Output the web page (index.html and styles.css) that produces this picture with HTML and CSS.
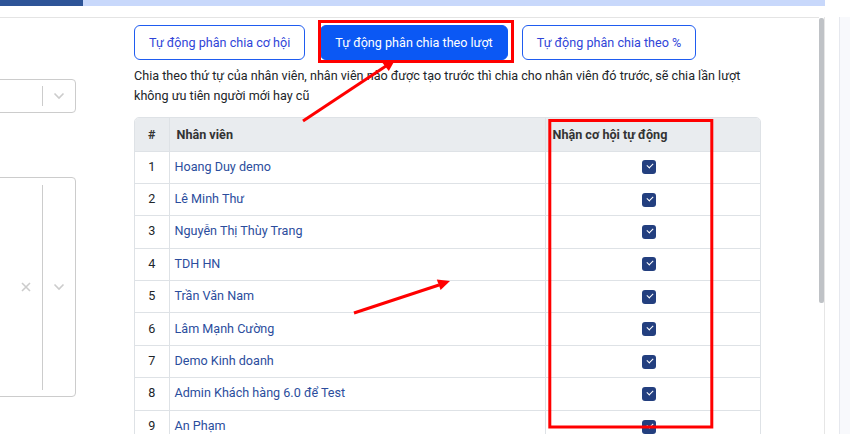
FILE: index.html
```html
<!DOCTYPE html>
<html lang="vi">

<head>
    <meta charset="UTF-8">
    <meta name="viewport" content="width=device-width, initial-scale=1.0">
    <title>Phân chia cơ hội</title>
    <link rel="stylesheet" href="styles.css">
</head>

<body>
    <div class="topbar"><span class="topbar-active"></span></div>

    <div class="frame">
        <div class="card">
            <div class="side">
                <div class="select select-single">
                    <div class="select-value"></div>
                    <div class="select-tools">
                        <span class="select-sep"></span>
                        <svg class="chev" width="12" height="8" viewBox="0 0 12 8"><path d="M1.5 1.5 L6 6 L10.5 1.5" fill="none" stroke="#cccccc" stroke-width="1.6"/></svg>
                    </div>
                </div>
                <div class="select select-multi">
                    <div class="select-value"></div>
                    <div class="select-tools">
                        <svg class="clear" width="10" height="10" viewBox="0 0 10 10"><path d="M1 1 L9 9 M9 1 L1 9" stroke="#cccccc" stroke-width="1.6"/></svg>
                        <span class="select-sep"></span>
                        <svg class="chev" width="12" height="8" viewBox="0 0 12 8"><path d="M1.5 1.5 L6 6 L10.5 1.5" fill="none" stroke="#cccccc" stroke-width="1.6"/></svg>
                    </div>
                </div>
            </div>

            <div class="main">
                <div class="tabs">
                    <button class="tab">Tự động phân chia cơ hội</button>
                    <button class="tab tab-active">Tự động phân chia theo lượt</button>
                    <button class="tab">Tự động phân chia theo %</button>
                </div>
                <p class="desc">Chia theo thứ tự của nhân viên, nhân viên nào được tạo trước thì chia cho nhân viên đó trước, sẽ chia lần lượt không ưu tiên người mới hay cũ</p>

                <div class="table-wrap">
                    <table class="staff">
                        <thead>
                            <tr>
                                <th class="col-no">#</th>
                                <th class="col-name">Nhân viên</th>
                                <th class="col-auto">Nhận cơ hội tự động</th>
                            </tr>
                        </thead>
                        <tbody>
                            <tr><td class="col-no">1</td><td class="col-name"><a href="#">Hoang Duy demo</a></td><td class="col-check"><span class="check"></span></td></tr>
                            <tr><td class="col-no">2</td><td class="col-name"><a href="#">Lê Minh Thư</a></td><td class="col-check"><span class="check"></span></td></tr>
                            <tr><td class="col-no">3</td><td class="col-name"><a href="#">Nguyễn Thị Thùy Trang</a></td><td class="col-check"><span class="check"></span></td></tr>
                            <tr><td class="col-no">4</td><td class="col-name"><a href="#">TDH HN</a></td><td class="col-check"><span class="check"></span></td></tr>
                            <tr><td class="col-no">5</td><td class="col-name"><a href="#">Trần Văn Nam</a></td><td class="col-check"><span class="check"></span></td></tr>
                            <tr><td class="col-no">6</td><td class="col-name"><a href="#">Lâm Mạnh Cường</a></td><td class="col-check"><span class="check"></span></td></tr>
                            <tr><td class="col-no">7</td><td class="col-name"><a href="#">Demo Kinh doanh</a></td><td class="col-check"><span class="check"></span></td></tr>
                            <tr><td class="col-no">8</td><td class="col-name"><a href="#">Admin Khách hàng 6.0 để Test</a></td><td class="col-check"><span class="check"></span></td></tr>
                            <tr><td class="col-no">9</td><td class="col-name"><a href="#">An Phạm</a></td><td class="col-check"><span class="check"></span></td></tr>
                        </tbody>
                    </table>
                </div>
            </div>
        </div>

        <div class="scroll"><span class="scroll-thumb"></span></div>
        <div class="gutter"></div>
        <div class="aside"></div>
    </div>

    <!-- red annotations drawn on top of the screenshot -->
    <svg class="marks" width="850" height="434" viewBox="0 0 850 434">
        <rect x="319.5" y="21.5" width="193" height="40" fill="none" stroke="#ff0000" stroke-width="3"/>
        <rect x="549.8" y="120.5" width="162" height="306.5" fill="none" stroke="#ff0000" stroke-width="3"/>
        <line x1="303" y1="121" x2="386" y2="66" stroke="#ff0000" stroke-width="3"/>
        <polygon points="395,60 388.8,71 381.6,61.8" fill="#ff0000"/>
        <line x1="354" y1="313" x2="439" y2="285" stroke="#ff0000" stroke-width="3"/>
        <polygon points="450,281 440.6,290 436.8,279.6" fill="#ff0000"/>
    </svg>
</body>

</html>
```

FILE: styles.css
```css
* {
    padding: 0;
    margin: 0;
    box-sizing: border-box;
}

html,
body {
    height: 100%;
    overflow: hidden;
}

body {
    position: relative;
    background: #ffffff;
    font-family: Roboto, "Noto Sans", "Liberation Sans", sans-serif;
    font-size: 12.6px;
    color: #212529;
}

.topbar {
    width: 825px;
    height: 6px;
    background: #c8d8fb;
}

.topbar-active {
    display: block;
    width: 83px;
    height: 100%;
    background: #2d5497;
}

.frame {
    display: flex;
    margin-top: 11px;
    height: calc(100% - 17px);
}

.card {
    display: flex;
    width: 819px;
    flex: 0 0 819px;
    border-top: 1px solid #e4e4e4;
}

/* left column with the cut-off selects */
.side {
    flex: 0 0 96px;
    margin-left: -20px;
}

.select {
    display: flex;
    border: 1px solid #cccccc;
    border-radius: 4px;
}

.select-single {
    height: 34px;
    margin-top: 61px;
}

.select-multi {
    height: 220px;
    margin-top: 64px;
}

.select-value {
    flex: 1;
}

.select-tools {
    display: flex;
    align-items: center;
}

.select-sep {
    align-self: stretch;
    width: 1px;
    margin: 6px 0;
    background: #cccccc;
}

.select-multi .select-sep {
    margin: 7px 0 6px;
}

.chev {
    margin: 0 10px 0 10px;
}

.clear {
    margin-right: 11px;
}

/* main area */
.main {
    margin-left: 58px;
    width: 627px;
}

.tabs {
    display: flex;
    margin-top: 7px;
}

.tab {
    height: 35px;
    padding: 0 14px;
    margin-right: 15px;
    border: 1px solid #1f5cf0;
    border-radius: 6px;
    background: #ffffff;
    color: #2f45d8;
    font-family: inherit;
    font-size: 12.6px;
}

.tab-active {
    background: #0b58f4;
    border-color: #0b58f4;
    color: #ffffff;
    margin-right: 14px;
}

.desc {
    margin-top: 6px;
    width: 615px;
    line-height: 20px;
}

.table-wrap {
    margin-top: 11px;
    border: 1px solid #dee2e6;
    border-radius: 5px 5px 0 0;
    overflow: hidden;
}

.staff {
    width: 100%;
    border-collapse: collapse;
}

.staff th {
    height: 33px;
    background: #e9ecef;
    font-weight: 700;
    text-align: left;
    padding: 0 7px;
    color: #333333;
}

.staff td {
    height: 32.4px;
    padding: 0 5px 2px;
    border-top: 1px solid #dee2e6;
}

.staff th + th,
.staff td + td {
    border-left: 1px solid #dee2e6;
}

.staff .col-no {
    width: 34px;
    text-align: center;
    padding: 0 0 2px;
}

.staff th.col-no {
    padding: 0;
}

.staff .col-name {
    width: 376px;
}

.col-name a {
    color: #2b4d9d;
    text-decoration: none;
}

.staff .col-check {
    text-align: center;
    padding: 0 7px 0 0;
}

.check {
    display: inline-block;
    position: relative;
    width: 14px;
    height: 14px;
    margin-top: 3px;
    border-radius: 3px;
    background: #233f7f;
}

.check::after {
    content: "";
    position: absolute;
    left: 4.5px;
    top: 3px;
    width: 5px;
    height: 3px;
    border-left: 1.6px solid #ffffff;
    border-bottom: 1.6px solid #ffffff;
    transform: rotate(-45deg);
}

/* page scrollbar and the right edge */
.scroll {
    flex: 0 0 5px;
}

.scroll-thumb {
    display: block;
    height: 285px;
    margin-top: 1px;
    border-radius: 2px;
    background: #bfc2c6;
}

.gutter {
    flex: 0 0 15px;
    border-left: 1px solid #e6e6e6;
}

.aside {
    flex: 1;
    border-left: 1px solid #e6e8ee;
    background: #f8f9fc;
}

.marks {
    position: absolute;
    top: 0;
    left: 0;
    pointer-events: none;
}
```
